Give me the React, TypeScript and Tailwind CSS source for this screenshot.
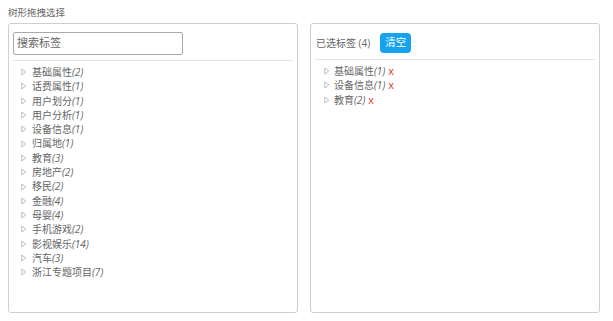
import React from "react";

const items: [string, number][] = [
  ["基础属性", 2],
  ["话费属性", 1],
  ["用户划分", 1],
  ["用户分析", 1],
  ["设备信息", 1],
  ["归属地", 1],
  ["教育", 3],
  ["房地产", 2],
  ["移民", 2],
  ["金融", 4],
  ["母婴", 4],
  ["手机游戏", 2],
  ["影视娱乐", 14],
  ["汽车", 3],
  ["浙江专题项目", 7],
];

const selected: [string, number][] = [
  ["基础属性", 1],
  ["设备信息", 1],
  ["教育", 2],
];

function Tri() {
  return (
    <svg width="6" height="8" viewBox="0 0 6 8" className="shrink-0">
      <path d="M0.8 1 L4.8 4 L0.8 7 Z" fill="none" stroke="#bdbdbd" strokeWidth="1" strokeLinejoin="round" />
    </svg>
  );
}

export default function App() {
  const font = { fontFamily: '"Open Sans", "Noto Sans CJK SC", sans-serif' };
  return (
    <div className="w-[613px] h-[321px] bg-white pl-[8px] pt-[5px]" style={font}>
      <div className="text-[9.5px] leading-[16px] text-[#666]">树形拖拽选择</div>
      <div className="mt-[2px] flex gap-[12px]">
        <div className="w-[290px] h-[290px] border border-[#cfcfcf] rounded-[3px] px-[4px]">
          <div className="pt-[8px] pb-[5px]">
            <div className="w-[170px] h-[23px] border border-[#a9a9a9] rounded-[2px] flex items-center pl-[3px] text-[11px] text-[#666]">
              搜索标签
            </div>
          </div>
          <div className="h-[1px] bg-[#e3e3e3]" />
          <div className="pt-[4px] pl-[8px]">
            {items.map(([n, c]) => (
              <div key={n} className="flex items-center h-[14.3px] leading-[14.3px] text-[10px] text-[#666] whitespace-nowrap">
                <Tri />
                <span className="ml-[5px]">{n}</span>
                <span className="italic">({c})</span>
              </div>
            ))}
          </div>
        </div>
        <div className="w-[290px] h-[290px] border border-[#cfcfcf] rounded-[3px] px-[4px]">
          <div className="pt-[9px] pb-[6px] pl-[1px] flex items-center h-[35px]">
            <span className="text-[10px] text-[#666] whitespace-pre">已选标签 (4)</span>
            <span className="ml-[10px] h-[20px] w-[31px] justify-center rounded-[4px] bg-[#16a2ef] text-white text-[10.5px] flex items-center">
              清空
            </span>
          </div>
          <div className="h-[1px] bg-[#e3e3e3]" />
          <div className="pt-[4px] pl-[9px]">
            {selected.map(([n, c]) => (
              <div key={n} className="flex items-center h-[14.3px] leading-[14.3px] text-[10px] text-[#666] whitespace-nowrap">
                <Tri />
                <span className="ml-[4px]">{n}</span>
                <span className="italic">({c})</span>
                <span className="ml-[3px] text-[#e8332c] text-[11px]">x</span>
              </div>
            ))}
          </div>
        </div>
      </div>
    </div>
  );
}
